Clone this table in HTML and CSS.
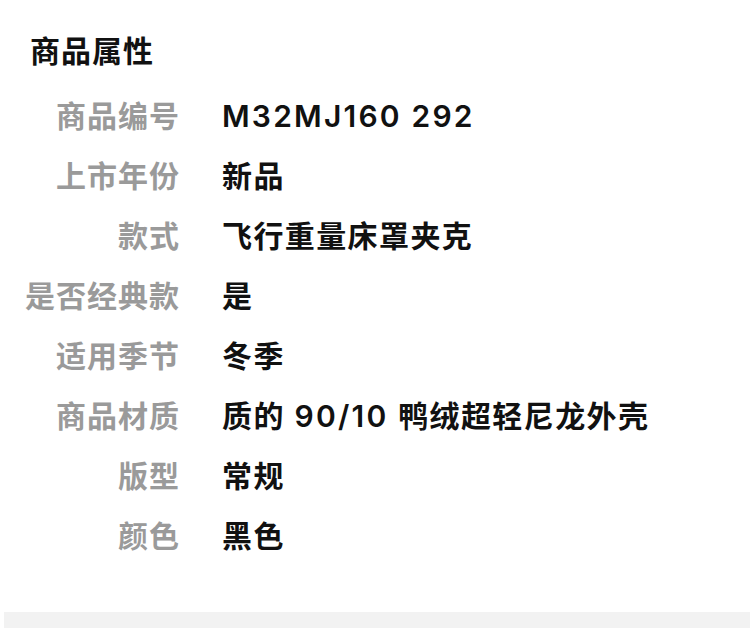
FILE: index.html
```html
<!DOCTYPE html>
<html lang="zh-CN">
<head>
<meta charset="utf-8">
<title>商品属性</title>
<link rel="stylesheet" href="styles.css">
</head>
<body>
<div class="page">
  <h2 class="title">商品属性</h2>
  <dl class="attrs">
    <dt>商品编号</dt><dd><span class="num">M32MJ160 292</span></dd>
    <dt>上市年份</dt><dd>新品</dd>
    <dt>款式</dt><dd>飞行重量床罩夹克</dd>
    <dt>是否经典款</dt><dd>是</dd>
    <dt>适用季节</dt><dd>冬季</dd>
    <dt>商品材质</dt><dd>质的<span class="num"> 90/10 </span>鸭绒超轻尼龙外壳</dd>
    <dt>版型</dt><dd>常规</dd>
    <dt>颜色</dt><dd>黑色</dd>
  </dl>
</div>
<div class="footer-bar"></div>
</body>
</html>
```
FILE: styles.css
```css
html, body {
  margin: 0;
  padding: 0;
  background: #ffffff;
}
body {
  font-family: Inter, "Noto Sans", "Noto Sans CJK SC", sans-serif;
  width: 750px;
  height: 628px;
  overflow: hidden;
}
.page {
  padding: 31px 0 0 0;
  height: 581px;
  box-sizing: border-box;
}
.title {
  margin: 0 0 15px 30px;
  font-size: 30px;
  line-height: 40px;
  font-weight: 700;
  color: #111111;
  letter-spacing: 1px;
}
.attrs {
  margin: 0;
  display: grid;
  grid-template-columns: 180px 1fr;
  column-gap: 42px;
  grid-auto-rows: 60px;
  align-items: center;
}
.attrs dt {
  text-align: right;
  font-size: 30px;
  line-height: 40px;
  font-weight: 700;
  color: #9a9a9a;
  letter-spacing: 1px;
}
.attrs dd {
  margin: 0;
  font-size: 30px;
  line-height: 40px;
  font-weight: 700;
  color: #111111;
  letter-spacing: 1.4px;
}
.num {
  font-weight: 600;
  letter-spacing: 2.2px;
}
.footer-bar {
  margin: 31px 0 0 4px;
  height: 20px;
  background: #f2f2f2;
}
```
